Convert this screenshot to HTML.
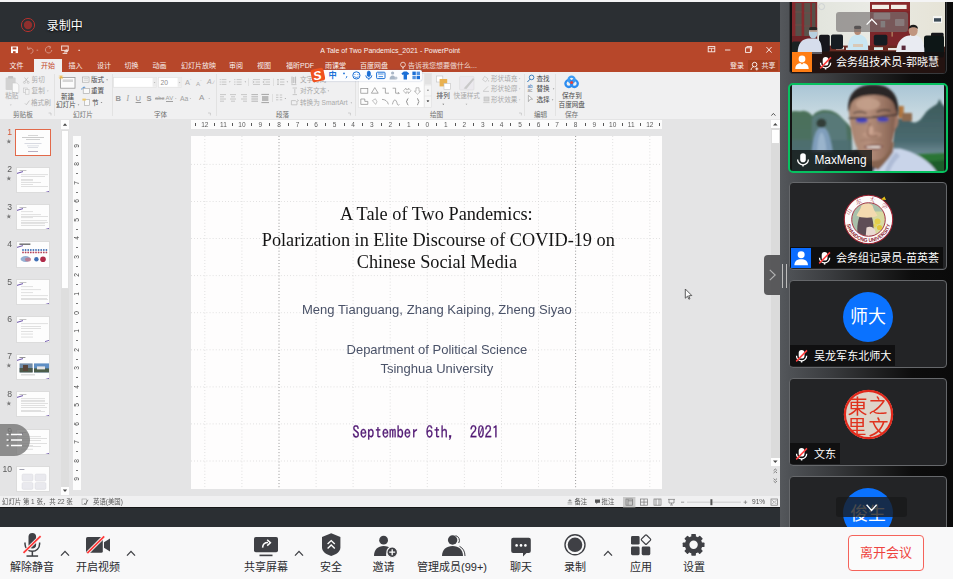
<!DOCTYPE html><html lang="zh"><head><meta charset="utf-8"><title>Meeting</title><style>
*{margin:0;padding:0;box-sizing:border-box}
html,body{width:953px;height:579px;overflow:hidden;background:#2b2f33;font-family:"Liberation Sans","Noto Sans CJK SC",sans-serif}
#root{position:relative;width:953px;height:579px;overflow:hidden;background:#2b2f33}
.abs{position:absolute}
.t{position:absolute;white-space:nowrap;line-height:1}
#topstrip{left:0;top:0;width:953px;height:2px;background:#f4f4f5}
/* ppt */
#ppt{left:0;top:42px;width:780px;height:466px;background:#e4e4e5;overflow:hidden}
#pptin{position:absolute;left:0;top:0;width:780px;height:466px;filter:blur(.4px)}
#ttl{left:0;top:0;width:780px;height:29px;background:#b7472a}
#ribbon{left:0;top:29px;width:780px;height:48px;background:#f1f1f1}
.tab{position:absolute;top:19.5px;font-size:7px;color:#fff;white-space:nowrap;line-height:8px;opacity:.92}
.rl{position:absolute;font-size:6.5px;color:#555;white-space:nowrap;line-height:7px}
.rg{position:absolute;font-size:6.5px;color:#8a8a8a;white-space:nowrap;line-height:7px}
.gl{position:absolute;font-size:6.5px;color:#666;white-space:nowrap;line-height:7px;top:40px}
.sep{position:absolute;top:3px;width:1px;height:42px;background:#dcdcdc}
#status{left:0;top:453.5px;width:780px;height:12.5px;background:#f1f1f1}
.st{position:absolute;top:3px;font-size:6.5px;color:#555;white-space:nowrap;line-height:7px}
/* toolbar */
#tb{left:0;top:527px;width:953px;height:52px;background:#f8f8f9}
.lb{position:absolute;top:33.5px;font-size:11px;line-height:12px;color:#2a2b2e;white-space:nowrap;transform:translateX(-50%)}
.ic{position:absolute;overflow:visible}
/* right panel */
#rp{left:780px;top:2px;width:173px;height:525px;background:linear-gradient(90deg,#55585c 0px,#4e5155 10px,#3a3c3f 50px,#232425 90px,#0d0d0d 132px,#0a0a0a 173px);overflow:hidden}
.tile{position:absolute;left:9px;width:158px;height:90px;background:#232426;border:1px solid #66686b;border-radius:4px;overflow:hidden}
.nm{position:absolute;left:0;bottom:.7px;height:20px;background:rgba(12,12,13,.82);color:#fff;font-size:11px;line-height:20px;white-space:nowrap}
</style></head><body><div id="root">
<div id="topstrip" class="abs"></div>
<svg class="abs" style="left:19px;top:16px" width="18" height="18" viewBox="0 0 18 18"><circle cx="9" cy="9" r="6.6" fill="none" stroke="#b3312d" stroke-width="1"/><circle cx="9" cy="9" r="4.2" fill="#8f2f2d"/></svg>
<div class="t" style="left:46.8px;top:19.8px;font-size:12px;color:#fff;text-shadow:0 1px 2px #000">录制中</div>
<div id="ppt" class="abs"><div id="pptin">
<div class="abs" style="left:0;top:-42px;width:780px;height:579px">
<div class="abs" style="left:0;top:42px;width:780px;height:30px;background:#b7472a"></div>
<div class="abs" style="left:0;top:72px;width:780px;height:47px;background:#f0f0f1"></div>
<div class="abs" style="left:34px;top:59px;width:27.5px;height:14px;background:#f0f0f1"></div>
<svg class="abs" style="left:0;top:42px" width="780" height="17" viewBox="0 42 780 17">
<g fill="none" stroke="#fff" stroke-width="1">
<rect x="11" y="46.5" width="7" height="6.6" fill="#fff" stroke="none"/><rect x="12.6" y="47.4" width="3.8" height="2" fill="#b7472a" stroke="none"/><rect x="13" y="51.2" width="2.6" height="1.9" fill="#b7472a" stroke="none"/>
<g opacity=".42"><path d="M28.4 48.6 C31 47.4 33.2 48.8 33 51.2 C32.8 52.6 31.8 53.4 30.6 53.4"/><path d="M27.6 46.6 L27.8 49.4 L30.4 48.8" />
<path d="M36.6 50.2 h1.6"/>
<path d="M50.2 47 A3.2 3.2 0 1 0 51.8 50"/><path d="M48.6 46 L50.6 46.8 L49.8 48.8"/></g>
<g opacity=".8"><rect x="61.6" y="46" width="6.6" height="4.4"/><path d="M64.9 50.4 v2.4 M62.6 53.4 h4.6"/><circle cx="66.6" cy="50.8" r="1.6" fill="#fff" stroke="none"/></g>
<path d="M78.4 50 h1.6 l-.8 1 z" fill="#fff" stroke="#fff" stroke-width=".5" opacity=".8"/>
</g>
<g fill="none" stroke="#fff" stroke-width=".9" opacity=".92">
<rect x="708.2" y="46.6" width="6.6" height="5.2"/><path d="M708.2 48.4 h6.6 M711.5 48.4 v3.4" stroke-width=".7"/>
<path d="M725 50 h5.4"/>
<rect x="745.6" y="47.8" width="4.8" height="4.6"/><path d="M746.8 47.8 v-1.2 h4.8 v4.6 h-1.2"/>
<path d="M766.4 47 L771.6 52.6 M771.6 47 L766.4 52.6"/>
</g></svg>
<div class="t" style="left:320.3px;top:46.9px;font-size:7.02px;color:#fff;opacity:.93">A Tale of Two Pandemics_2021 - PowerPoint</div>
<div class="tab" style="left:9.5px;top:61.5px">文件</div>
<div class="tab" style="left:68.5px;top:61.5px">插入</div>
<div class="tab" style="left:97px;top:61.5px">设计</div>
<div class="tab" style="left:124.5px;top:61.5px">切换</div>
<div class="tab" style="left:152.5px;top:61.5px">动画</div>
<div class="tab" style="left:181px;top:61.5px">幻灯片放映</div>
<div class="tab" style="left:229px;top:61.5px">审阅</div>
<div class="tab" style="left:257px;top:61.5px">视图</div>
<div class="tab" style="left:286px;top:61.5px">福昕PDF</div>
<div class="tab" style="left:325px;top:61.5px">雨课堂</div>
<div class="tab" style="left:360px;top:61.5px">百度网盘</div>
<div class="tab" style="left:41px;top:61.5px;color:#c4482a;opacity:1">开始</div>
<div class="tab" style="left:408px;top:61.5px;opacity:.8">告诉我您想要做什么...</div>
<svg class="abs" style="left:399px;top:61px" width="8" height="10" viewBox="0 0 8 10"><circle cx="4" cy="3.6" r="2.4" fill="none" stroke="#fff" stroke-width=".8" opacity=".85"/><path d="M3 6.6 h2 M3.2 7.8 h1.6" stroke="#fff" stroke-width=".7" opacity=".85"/></svg>
<div class="tab" style="left:730px;top:61.5px">登录</div>
<div class="abs" style="left:748px;top:59.5px;width:30px;height:11.5px;background:#a5401f"></div>
<svg class="abs" style="left:750px;top:60.5px" width="10" height="10" viewBox="0 0 10 10"><circle cx="4.6" cy="3.6" r="2.3" fill="none" stroke="#fff" stroke-width=".9"/><path d="M1 9 C1.2 7 2.4 6 3.6 5.8 M6.8 6.4 v3 M5.3 7.9 h3" fill="none" stroke="#fff" stroke-width=".9"/></svg>
<div class="tab" style="left:761.5px;top:61.5px">共享</div>
<svg class="abs" style="left:0;top:72px" width="780" height="47" viewBox="0 72 780 47">
<g opacity=".9">
<!-- paste -->
<rect x="5.6" y="77.6" width="10" height="12.4" rx="1" fill="#cfcfcf"/><rect x="8" y="76" width="5.2" height="2.6" rx=".8" fill="#bdbdbd"/><path d="M12.4 83 h4.4 l2 2 v7.6 h-6.4 z" fill="#fafafa" stroke="#c6c6c6" stroke-width=".6"/>
<!-- cut copy brush icons -->
<path d="M24.6 77.6 l3.4 4.2 M28 77.6 l-3.4 4.2" stroke="#b5b5b5" stroke-width=".8"/><circle cx="24.4" cy="82.4" r="1" fill="none" stroke="#b5b5b5" stroke-width=".6"/><circle cx="28.2" cy="82.4" r="1" fill="none" stroke="#b5b5b5" stroke-width=".6"/>
<rect x="23.6" y="88" width="3.6" height="4.6" fill="none" stroke="#c0c0c0" stroke-width=".6"/><rect x="25.4" y="89.6" width="3.6" height="4.6" fill="#f4f4f4" stroke="#c0c0c0" stroke-width=".6"/>
<path d="M25 103.4 l1.4 1.4 l3 -4.2" stroke="#c0c0c0" stroke-width=".9" fill="none"/>
<!-- new slide -->
<rect x="60.6" y="77.4" width="14.4" height="10.8" fill="#fdfdfd" stroke="#8c8c8c" stroke-width=".8"/><rect x="62.6" y="79.4" width="10.4" height="2.6" fill="#d4d4d4"/>
<path d="M61 75 v4.4 M58.8 77.2 h4.4 M59.4 75.6 l3.2 3.2 M62.6 75.6 l-3.2 3.2" stroke="#f0b429" stroke-width=".7"/>
<path d="M77.6 104.4 h1.8 l-.9 1.1 z" fill="#666"/>
<!-- layout reset section icons -->
<rect x="82.6" y="77" width="6.4" height="5.2" fill="#fafafa" stroke="#9a9a9a" stroke-width=".6"/><path d="M83.6 78.6 h4.4 M83.6 80.2 h4.4" stroke="#b5b5b5" stroke-width=".6"/>
<rect x="83.2" y="88.4" width="6.2" height="5" fill="#fafafa" stroke="#9a9a9a" stroke-width=".6"/><path d="M81.8 89.6 a2.4 2.4 0 0 1 3.4 -2.2" fill="none" stroke="#2b78c8" stroke-width=".9"/>
<rect x="84.4" y="99.4" width="5" height="6" fill="#fafafa" stroke="#a0a0a0" stroke-width=".6"/><rect x="82.4" y="98.6" width="3.4" height="2" fill="#efc45a"/>
<path d="M106.2 79.4 h1.8 l-.9 1.1 z M100.6 102 h1.8 l-.9 1.1 z" fill="#666"/>
</g>
<!-- separators -->
<g stroke="#e2e2e2" stroke-width="1"><path d="M54.5 74 v42 M112.5 74 v42 M216.5 74 v42 M355.5 74 v42 M524.5 74 v42 M555.5 74 v42"/></g>
<!-- font boxes -->
<rect x="113.5" y="77.6" width="43" height="9.6" fill="#fff" stroke="#dedede" stroke-width=".6"/><rect x="152.6" y="78" width="3.8" height="8.8" fill="#ececec"/>
<rect x="158.6" y="77.6" width="23" height="9.6" fill="#fff" stroke="#dedede" stroke-width=".6"/><rect x="177.6" y="78" width="3.8" height="8.8" fill="#ececec"/>
<path d="M153.8 82 h1.6 l-.8 1 z M178.8 82 h1.6 l-.8 1 z" fill="#aaa"/>
<!-- paragraph icons -->
<g stroke="#bdbdbd" stroke-width=".8" fill="none">
<path d="M221.6 79.6 h4.8 M221.6 82 h4.8 M221.6 84.4 h4.8"/><path d="M219.8 79.6 h.8 M219.8 82 h.8 M219.8 84.4 h.8" stroke="#a8a8a8"/>
<path d="M236.6 79.6 h5 M236.6 82 h5 M236.6 84.4 h5"/><path d="M234.4 79.6 h.9 M234.4 82 h.9 M234.4 84.4 h.9" stroke="#a8a8a8"/>
<path d="M253 79.6 h7 M255.6 82 h4.4 M253 84.4 h7 M252.6 81 l1.6 1 l-1.6 1"/>
<path d="M263 79.6 h7 M265.6 82 h4.4 M263 84.4 h7 M264.4 81 l-1.6 1 l1.6 1"/>
<path d="M280 79.4 h4.4 M280 82 h4.4 M280 84.6 h4.4 M278 79 v6 M277.2 80 l.8 -1 l.8 1 M277.2 84 l.8 1 l.8 -1"/>
<path d="M220 94.6 h6 M220 96.8 h4 M220 99 h6 M220 101.2 h4"/>
<path d="M230 94.6 h6 M231 96.8 h4 M230 99 h6 M231 101.2 h4"/>
<path d="M241 94.6 h6 M243 96.8 h4 M241 99 h6 M243 101.2 h4"/>
<path d="M251.4 94.6 h6.6 M251.4 96.8 h6.6 M251.4 99 h6.6 M251.4 101.2 h6.6" stroke="#a5a5a5"/>
<path d="M261.4 94.4 h7.6 M261.4 102.6 h7.6" stroke="#8e8e8e"/><rect x="262" y="96" width="6.4" height="5" fill="#b9b9b9" stroke="none"/>
<path d="M276 95 h2.4 M276 97.4 h2.4 M276 99.8 h2.4 M279.8 95 h2.4 M279.8 97.4 h2.4 M279.8 99.8 h2.4"/>
<path d="M248.5 78.4 v7.6 M273.5 78.4 v7.6 M272.5 94 v8" stroke="#dadada"/>
<!-- text direction icons -->
<path d="M292 76.6 v7 M295.6 76.6 v7 M293.8 77 v6" stroke="#a8a8a8"/><path d="M291.4 84.6 h5"/>
<path d="M292.6 88 h4.4 M292.6 94.6 h4.4 M294.8 89 v4.6"/>
<path d="M291.4 100.6 h4 l1.6 1.6 v2.6 h-5.6 z M297 99.6 l1.6 1 l-1.6 1"/>
</g>
<g fill="#9a9a9a"><path d="M229 81.6 h1.6 l-.8 1 z M244.6 81.6 h1.6 l-.8 1 z M286.6 81.6 h1.6 l-.8 1 z M284.6 98 h1.6 l-.8 1 z M327.6 90.6 h1.6 l-.8 1 z M350.6 102.4 h1.6 l-.8 1 z"/></g>
<!-- shapes gallery -->
<rect x="358.6" y="73.4" width="65.6" height="34" fill="#fdfdfd" stroke="#e2e2e2" stroke-width=".6"/>
<rect x="424.2" y="73.4" width="7.4" height="34" fill="#f6f6f6" stroke="#e0e0e0" stroke-width=".6"/><rect x="424.6" y="73.8" width="6.6" height="10.6" fill="#e2e2e2"/>
<path d="M424.2 85 h7.4 M424.2 96 h7.4" stroke="#e0e0e0" stroke-width=".6"/>
<path d="M427 90.2 h1.8 M427 100.6 h1.8 l-.9 1.4 z" stroke="#555" stroke-width=".7" fill="#777"/>
<g fill="none" stroke="#8a8a8a" stroke-width=".7">
<rect x="360.8" y="88.4" width="7" height="4.8"/><path d="M371.4 93.2 l3.4 -5.6 l3.4 5.6 z"/><path d="M382.4 88.2 h3 v5 h3.6"/><path d="M392.6 88.2 h3 v5 h3.6 M398.2 92.2 l1 1 l-1 1"/>
<path d="M403.4 90.8 l2.6 -2.8 v1.6 h2.4 v-1.6 l2.6 2.8 l-2.6 2.8 v-1.6 h-2.4 v1.6 z" stroke="#a5a5a5"/><path d="M416 87.8 h3 v3.4 h1.6 l-3.1 3 l-3.1 -3 h1.6 z" stroke="#a5a5a5"/>
<path d="M360.8 104.4 v-5.4 h4 v2.4 h3 v3 z"/><path d="M372.4 100.6 l3 -1.8 l1.6 3 l-1.4 2.6 z" stroke="#a8a8a8"/><path d="M382 99.4 c3 0 5.6 1.6 6.4 5"/><path d="M392.4 104.4 c1.4 -6 3.6 -6 5 0 M397.4 104.4 c.6 1 1.4 1 2 0"/>
<path d="M408.4 98.4 c-1.6 0 -.8 3.2 -2.2 3.2 c1.4 0 .6 3.4 2.2 3.4" stroke="#666"/><path d="M417 98.4 c1.6 0 .8 3.2 2.2 3.2 c-1.4 0 -.6 3.4 -2.2 3.4" stroke="#666"/>
</g>
<!-- arrange -->
<rect x="436.4" y="76" width="6.4" height="6" fill="#fff" stroke="#c2c2c2" stroke-width=".6"/><rect x="439.6" y="79" width="7.6" height="7.4" fill="#e9b150"/><rect x="444" y="83.4" width="6.4" height="6" fill="#fff" stroke="#c2c2c2" stroke-width=".6"/>
<path d="M442.4 103.8 h1.8 l-.9 1.1 z" fill="#666"/><path d="M465.6 103.8 h1.8 l-.9 1.1 z" fill="#aaa"/>
<!-- quick style -->
<rect x="459.6" y="76.4" width="14.4" height="13.6" rx="1" fill="#ebe9ee" stroke="#dcdcdc" stroke-width=".6"/><path d="M463.6 88.6 l9.4 -10.6 l1.4 1.2 l-8 9.8 z" fill="#c9c9c9"/>
<!-- shape fill icons -->
<g fill="none" stroke="#c0c0c0" stroke-width=".7"><path d="M484.6 76.4 l3.4 2.4 l-2.4 3 l-3 -2.2 z M488.6 80 v1.6"/><path d="M483.4 91 l4.6 -4.6 M483 91.4 h6"/><rect x="484" y="97" width="5" height="4" fill="#d4d4d4"/><path d="M483.2 102.6 h6.4"/></g>
<g fill="#b5b5b5"><path d="M518.8 78.2 h1.6 l-.8 1 z M518.8 88.4 h1.6 l-.8 1 z M518.8 99.4 h1.6 l-.8 1 z"/></g>
<g fill="#777"><path d="M552.8 88.4 h1.6 l-.8 1 z M551.8 99.4 h1.6 l-.8 1 z"/></g>
<!-- find replace select icons -->
<circle cx="531.6" cy="77.4" r="2.3" fill="none" stroke="#2e75b6" stroke-width=".9"/><path d="M530 79.2 l-2.6 2.8" stroke="#2e75b6" stroke-width="1"/>
<path d="M528.4 101.6 v-6.2 l4.2 3.8 h-2.4 z" fill="#fdfdfd" stroke="#8a8a8a" stroke-width=".6"/>
<!-- baidu -->
<g fill="none" stroke-width="2.3"><circle cx="568.8" cy="83.6" r="3.4" stroke="#2c8cf0"/><circle cx="574.4" cy="83.6" r="3.4" stroke="#2c8cf0"/><circle cx="571.6" cy="79.6" r="3" stroke="#3b9cf5"/></g><circle cx="571.6" cy="82.6" r="1.5" fill="#e8413a"/>
<!-- dialog launchers -->
<g stroke="#b8b8b8" stroke-width=".6" fill="none"><path d="M48.6 113 h2.4 v2.4 M208 113 h2.4 v2.4 M348 113 h2.4 v2.4 M519 113 h2.4 v2.4"/></g>
<!-- collapse ribbon -->
<path d="M771.4 115.6 l2 -2.2 l2 2.2" fill="none" stroke="#555" stroke-width="1"/>
</svg>
<div class="rl" style="left:5.2px;top:92.4px;color:#a9a9a9;font-size:6.6px;">粘贴</div>
<svg class="abs" style="left:9px;top:103.5px" width="4" height="3" viewBox="0 0 4 3"><path d="M.8 .6 h2 l-1 1.2 z" fill="#c4c4c4"/></svg>
<div class="rl" style="left:31.6px;top:76.10000000000001px;color:#a9a9a9;font-size:6.6px;">剪切</div>
<div class="rl" style="left:31.6px;top:87.4px;color:#a9a9a9;font-size:6.6px;">复制</div>
<div class="rl" style="left:31px;top:98.7px;color:#a9a9a9;font-size:6.6px;">格式刷</div>
<svg class="abs" style="left:46px;top:90px" width="4" height="3" viewBox="0 0 4 3"><path d="M.8 .6 h2 l-1 1.2 z" fill="#c4c4c4"/></svg>
<div class="rl" style="left:13px;top:110.80000000000001px;color:#6f6f6f;font-size:6.6px;">剪贴板</div>
<div class="rl" style="left:61px;top:92.60000000000001px;color:#4a4a4a;font-size:6.6px;">新建</div>
<div class="rl" style="left:56px;top:100.80000000000001px;color:#4a4a4a;font-size:6.6px;">幻灯片</div>
<div class="rl" style="left:91px;top:76.10000000000001px;color:#4a4a4a;font-size:6.6px;">版式</div>
<div class="rl" style="left:91px;top:87.4px;color:#4a4a4a;font-size:6.6px;">重置</div>
<div class="rl" style="left:92px;top:98.7px;color:#4a4a4a;font-size:6.6px;">节</div>
<div class="rl" style="left:73px;top:110.80000000000001px;color:#6f6f6f;font-size:6.6px;">幻灯片</div>
<div class="rl" style="left:160.4px;top:78.80000000000001px;color:#8e8e8e;font-size:6.8px;">20</div>
<div class="rl" style="left:185px;top:77.4px;color:#a9a9a9;font-size:7.4px">A<span style="font-size:4px;vertical-align:3px">ˆ</span></div>
<div class="rl" style="left:196px;top:78.4px;color:#a9a9a9;font-size:6.2px">A<span style="font-size:4px;vertical-align:3px">ˇ</span></div>
<div class="rl" style="left:207px;top:77.8px;color:#a9a9a9;font-size:7px;font-style:italic">A<span style="font-size:5px">ﾉ</span></div>
<div class="rl" style="left:115.4px;top:94.6px;color:#979797;font-size:7.6px;font-weight:bold">B</div>
<div class="rl" style="left:126.4px;top:94.6px;color:#979797;font-size:7.6px;font-style:italic;font-family:'Liberation Serif',serif">I</div>
<div class="rl" style="left:135.6px;top:94.6px;color:#979797;font-size:7.6px;text-decoration:underline">U</div>
<div class="rl" style="left:146.6px;top:94.6px;color:#979797;font-size:7.6px;font-weight:bold">S</div>
<div class="rl" style="left:155px;top:95.39999999999999px;color:#a5a5a5;font-size:5.8px;text-decoration:line-through">abc</div>
<div class="rl" style="left:165.6px;top:94.8px;color:#a0a0a0;font-size:6px;border-bottom:.7px solid #a0a0a0;line-height:6.4px">AV</div>
<div class="rl" style="left:180px;top:94.8px;color:#a0a0a0;font-size:6.8px">Aa</div>
<div class="rl" style="left:199px;top:94.19999999999999px;color:#979797;font-size:8px">A</div>
<svg class="abs" style="left:174px;top:97px" width="40" height="4" viewBox="0 0 40 4"><path d="M1 1 h1.6 l-.8 1 z M15.6 1 h1.6 l-.8 1 z M34.4 1 h1.6 l-.8 1 z" fill="#b5b5b5"/></svg>
<div class="rl" style="left:154px;top:110.80000000000001px;color:#6f6f6f;font-size:6.6px;">字体</div>
<div class="rl" style="left:300px;top:75.7px;color:#a9a9a9;font-size:6.6px;">文字方向</div>
<div class="rl" style="left:300px;top:87.4px;color:#a9a9a9;font-size:6.6px;">对齐文本</div>
<div class="rl" style="left:300px;top:99.0px;color:#a9a9a9;font-size:6.6px;">转换为 SmartArt</div>
<div class="rl" style="left:276px;top:110.80000000000001px;color:#6f6f6f;font-size:6.6px;">段落</div>
<div class="rl" style="left:436.6px;top:92.4px;color:#4a4a4a;font-size:6.6px;">排列</div>
<div class="rl" style="left:453.6px;top:92.4px;color:#a9a9a9;font-size:6.6px;">快速样式</div>
<div class="rl" style="left:491px;top:75.0px;color:#a9a9a9;font-size:6.6px;">形状填充</div>
<div class="rl" style="left:491px;top:85.2px;color:#a9a9a9;font-size:6.6px;">形状轮廓</div>
<div class="rl" style="left:491px;top:96.2px;color:#a9a9a9;font-size:6.6px;">形状效果</div>
<div class="rl" style="left:430px;top:111.0px;color:#6f6f6f;font-size:6.6px;">绘图</div>
<div class="rl" style="left:536.4px;top:75.0px;color:#4a4a4a;font-size:6.6px;">查找</div>
<div class="rl" style="left:536.4px;top:85.2px;color:#4a4a4a;font-size:6.6px;">替换</div>
<div class="rl" style="left:536.4px;top:96.2px;color:#4a4a4a;font-size:6.6px;">选择</div>
<div class="rl" style="left:527.4px;top:84.6px;color:#2e75b6;font-size:4.6px;line-height:4px">ab<br><span style="color:#888">ac</span></div>
<div class="rl" style="left:534px;top:111.0px;color:#6f6f6f;font-size:6.6px;">编辑</div>
<div class="rl" style="left:562px;top:92.4px;color:#4a4a4a;font-size:6.6px;">保存到</div>
<div class="rl" style="left:558.6px;top:101.2px;color:#4a4a4a;font-size:6.6px;">百度网盘</div>
<div class="rl" style="left:565px;top:111.0px;color:#6f6f6f;font-size:6.6px;">保存</div>
<div class="abs" style="left:319px;top:69.6px;width:103.4px;height:11.6px;background:#fcfdff;border-radius:2px;box-shadow:0 0 1.5px rgba(80,110,160,.6)"></div>
<svg class="abs" style="left:309px;top:66px" width="116" height="18" viewBox="309 66 116 18">
<g transform="rotate(-12 317.8 75)"><rect x="311.2" y="68.6" width="13.2" height="12.8" rx="2.8" fill="#f0521f"/></g>
<text x="313.2" y="79.8" font-family="'Liberation Sans',sans-serif" font-weight="bold" font-style="italic" font-size="12.4" fill="#fff" transform="rotate(-10 317.6 75)">S</text>
<g fill="none" stroke="#1b6fd6" stroke-width="1">
<circle cx="356.4" cy="75.4" r="3.6"/><path d="M354.4 76.4 c1 1.4 3 1.4 4 0" stroke-width=".8"/><path d="M355 74 v.8 M357.8 74 v.8" stroke-width=".8"/>
<rect x="367.4" y="71.2" width="2.8" height="5.2" rx="1.4" fill="#1b6fd6"/><path d="M365.8 75.4 a3 3 0 0 0 6 0 M368.8 78.4 v1.4"/>
<rect x="376.6" y="72.2" width="8.4" height="6.4" rx=".8"/><path d="M378 74 h5.6 M378.6 76.6 h4.4" stroke-width=".8"/>
</g>
<circle cx="344" cy="73.4" r=".9" fill="#1b6fd6"/><path d="M346.4 76 c.6 .4 .4 1.6 -.6 2.2" stroke="#1b6fd6" stroke-width="1" fill="none"/>
<g fill="#a9b6c6"><circle cx="392.6" cy="73" r="1.6"/><path d="M389.6 79.4 c0 -3 1.4 -4 3 -4 c1.6 0 3 1 3 4 z"/><circle cx="396" cy="78" r="1.5" fill="#bcc6d2"/></g>
<path d="M401.4 73.4 l2.4 -1.8 h3 l2.4 1.8 l-1.2 1.6 l-1 -.6 v5 h-3.4 v-5 l-1 .6 z" fill="#1b6fd6"/>
<g fill="#1b6fd6"><rect x="412.4" y="71.6" width="3.4" height="3.4"/><rect x="416.6" y="71.6" width="3.4" height="3.4" opacity=".75"/><rect x="412.4" y="75.8" width="3.4" height="3.4" opacity=".75"/><rect x="416.6" y="75.8" width="3.4" height="3.4"/></g>
</svg>
<div class="t" style="left:328.6px;top:71.8px;font-size:8.2px;font-weight:bold;color:#1b6fd6">中</div>
<div class="abs" style="left:0;top:120px;width:69px;height:376px;background:#e4e4e5"></div>
<div class="abs" style="left:60.5px;top:129.5px;width:8px;height:357px;background:#dedede"></div>
<div class="abs" style="left:60.5px;top:129.5px;width:8px;height:159px;background:#fefefe;border:.5px solid #e0e0e0"></div>
<div class="abs" style="left:60.5px;top:120px;width:8px;height:8.5px;background:#fdfdfd"></div>
<div class="abs" style="left:60.5px;top:486.5px;width:8px;height:8.5px;background:#fdfdfd"></div>
<svg class="abs" style="left:60.5px;top:120px" width="8" height="376" viewBox="0 0 8 376"><path d="M1.8 5.8 h4.4 l-2.2 -2.6 z M1.8 369.4 h4.4 l-2.2 2.6 z" fill="#4a4a4a"/></svg>
<div class="t" style="left:7.2px;top:127.9px;font-size:8.6px;color:#d35a3a">1</div>
<div class="t" style="left:6.2px;top:138.7px;font-size:5.2px;color:#777">★</div>
<div class="abs" style="left:15.4px;top:128.7px;width:35.4px;height:27.6px;background:#fdfdfd;border:1.2px solid #e2694a;overflow:hidden">
<svg class="abs" style="left:0;top:0" width="34" height="26" viewBox="0 0 34 26"><rect x="12" y="5.2" width="10" height=".6" fill="#bbb"/><rect x="6" y="7.4" width="22" height=".6" fill="#aaa"/><rect x="10" y="9.4" width="14" height=".6" fill="#b4b4b4"/><rect x="8.5" y="13" width="17" height=".6" fill="#c0c4d0"/><rect x="11" y="15.6" width="12" height=".6" fill="#c6cad4"/><rect x="12" y="17" width="10" height=".6" fill="#c6cad4"/><rect x="12" y="21.2" width="10" height=".6" fill="#8a7a9a"/></svg>
</div>
<div class="t" style="left:7.2px;top:165.3px;font-size:8.6px;color:#5c5c5c">2</div>
<div class="t" style="left:6.2px;top:176.1px;font-size:5.2px;color:#777">★</div>
<div class="abs" style="left:16px;top:166.5px;width:34px;height:26.4px;background:#fdfdfd;border:.5px solid #dcdcdc;overflow:hidden">
<svg class="abs" style="left:0;top:0" width="34" height="26" viewBox="0 0 34 26"><path d="M0 5.4 L6 3.6" stroke="#5b3fa0" stroke-width=".9"/><rect x="2.4" y="2" width="7" height=".7" fill="#aaa"/><rect x="4" y="6.6" width="27" height=".45" fill="#bcbcbc"/><rect x="4" y="8.1" width="24" height=".45" fill="#bcbcbc"/><rect x="4" y="11.1" width="12" height=".45" fill="#bcbcbc"/><rect x="4" y="12.6" width="12" height=".45" fill="#bcbcbc"/><rect x="4" y="14.1" width="20" height=".45" fill="#bcbcbc"/><rect x="4" y="16.5" width="12" height=".45" fill="#bcbcbc"/><rect x="4" y="18.0" width="27" height=".45" fill="#bcbcbc"/><path d="M28 24.6 L34 22.8" stroke="#5b3fa0" stroke-width=".8"/></svg>
</div>
<div class="t" style="left:7.2px;top:202.7px;font-size:8.6px;color:#5c5c5c">3</div>
<div class="t" style="left:6.2px;top:213.5px;font-size:5.2px;color:#777">★</div>
<div class="abs" style="left:16px;top:203.9px;width:34px;height:26.4px;background:#fdfdfd;border:.5px solid #dcdcdc;overflow:hidden">
<svg class="abs" style="left:0;top:0" width="34" height="26" viewBox="0 0 34 26"><path d="M0 5.4 L6 3.6" stroke="#5b3fa0" stroke-width=".9"/><rect x="2.4" y="2" width="7" height=".7" fill="#aaa"/><rect x="4" y="6.6" width="12" height=".45" fill="#bcbcbc"/><rect x="4" y="9.6" width="20" height=".45" fill="#bcbcbc"/><rect x="4" y="11.1" width="27" height=".45" fill="#bcbcbc"/><rect x="4" y="12.6" width="12" height=".45" fill="#bcbcbc"/><rect x="4" y="15.6" width="26" height=".45" fill="#bcbcbc"/><rect x="4" y="17.1" width="27" height=".45" fill="#bcbcbc"/><rect x="4" y="18.6" width="24" height=".45" fill="#bcbcbc"/><rect x="4" y="20.1" width="24" height=".45" fill="#bcbcbc"/><path d="M28 24.6 L34 22.8" stroke="#5b3fa0" stroke-width=".8"/></svg>
</div>
<div class="t" style="left:7.2px;top:240.2px;font-size:8.6px;color:#5c5c5c">4</div>
<div class="abs" style="left:16px;top:241.4px;width:34px;height:26.4px;background:#fdfdfd;border:.5px solid #dcdcdc;overflow:hidden">
<svg class="abs" style="left:0;top:0" width="34" height="26" viewBox="0 0 34 26"><path d="M0 5.4 L6 3.6" stroke="#5b3fa0" stroke-width=".9"/><rect x="2.4" y="1.6" width="11" height="1.1" fill="#444"/><circle cx="6.0" cy="8" r=".9" fill="#3f6fb5"/><circle cx="6.0" cy="10.4" r=".9" fill="#b5455a"/><circle cx="8.6" cy="8" r=".9" fill="#3f6fb5"/><circle cx="8.6" cy="10.4" r=".9" fill="#b5455a"/><circle cx="11.2" cy="8" r=".9" fill="#3f6fb5"/><circle cx="11.2" cy="10.4" r=".9" fill="#b5455a"/><circle cx="13.8" cy="8" r=".9" fill="#3f6fb5"/><circle cx="13.8" cy="10.4" r=".9" fill="#b5455a"/><circle cx="16.4" cy="8" r=".9" fill="#3f6fb5"/><circle cx="16.4" cy="10.4" r=".9" fill="#b5455a"/><circle cx="19.0" cy="8" r=".9" fill="#3f6fb5"/><circle cx="19.0" cy="10.4" r=".9" fill="#b5455a"/><circle cx="21.6" cy="8" r=".9" fill="#3f6fb5"/><circle cx="21.6" cy="10.4" r=".9" fill="#b5455a"/><circle cx="24.2" cy="8" r=".9" fill="#3f6fb5"/><circle cx="24.2" cy="10.4" r=".9" fill="#b5455a"/><circle cx="26.8" cy="8" r=".9" fill="#3f6fb5"/><circle cx="26.8" cy="10.4" r=".9" fill="#b5455a"/><circle cx="29.4" cy="8" r=".9" fill="#3f6fb5"/><circle cx="29.4" cy="10.4" r=".9" fill="#b5455a"/><ellipse cx="8.6" cy="17" rx="5" ry="3" fill="#7a9cc8" opacity=".8"/><ellipse cx="11" cy="17.4" rx="3" ry="2" fill="#c86a7a" opacity=".7"/><circle cx="19.4" cy="17.2" r="2.2" fill="#3f6fb5"/><circle cx="26" cy="17.2" r="2.8" fill="#b02a48"/></svg>
</div>
<div class="t" style="left:7.2px;top:277.6px;font-size:8.6px;color:#5c5c5c">5</div>
<div class="abs" style="left:16px;top:278.8px;width:34px;height:26.4px;background:#fdfdfd;border:.5px solid #dcdcdc;overflow:hidden">
<svg class="abs" style="left:0;top:0" width="34" height="26" viewBox="0 0 34 26"><path d="M0 5.4 L6 3.6" stroke="#5b3fa0" stroke-width=".9"/><rect x="2.4" y="2" width="7" height=".7" fill="#aaa"/><rect x="4" y="6.6" width="12" height=".45" fill="#bcbcbc"/><rect x="4" y="9.6" width="20" height=".45" fill="#bcbcbc"/><rect x="4" y="12.6" width="12" height=".45" fill="#bcbcbc"/><rect x="4" y="15.6" width="27" height=".45" fill="#bcbcbc"/><rect x="4" y="18.0" width="26" height=".45" fill="#bcbcbc"/><rect x="4" y="19.5" width="27" height=".45" fill="#bcbcbc"/><path d="M28 24.6 L34 22.8" stroke="#5b3fa0" stroke-width=".8"/></svg>
</div>
<div class="t" style="left:7.2px;top:315.0px;font-size:8.6px;color:#5c5c5c">6</div>
<div class="abs" style="left:16px;top:316.2px;width:34px;height:26.4px;background:#fdfdfd;border:.5px solid #dcdcdc;overflow:hidden">
<svg class="abs" style="left:0;top:0" width="34" height="26" viewBox="0 0 34 26"><path d="M0 5.4 L6 3.6" stroke="#5b3fa0" stroke-width=".9"/><rect x="2.4" y="2" width="7" height=".7" fill="#aaa"/><rect x="4" y="6.6" width="27" height=".45" fill="#bcbcbc"/><rect x="4" y="9.0" width="20" height=".45" fill="#bcbcbc"/><rect x="4" y="11.4" width="20" height=".45" fill="#bcbcbc"/><rect x="4" y="14.4" width="12" height=".45" fill="#bcbcbc"/><rect x="4" y="16.8" width="12" height=".45" fill="#bcbcbc"/><rect x="4" y="19.8" width="12" height=".45" fill="#bcbcbc"/><path d="M28 24.6 L34 22.8" stroke="#5b3fa0" stroke-width=".8"/></svg>
</div>
<div class="t" style="left:7.2px;top:352.4px;font-size:8.6px;color:#5c5c5c">7</div>
<div class="t" style="left:6.2px;top:363.2px;font-size:5.2px;color:#777">★</div>
<div class="abs" style="left:16px;top:353.6px;width:34px;height:26.4px;background:#fdfdfd;border:.5px solid #dcdcdc;overflow:hidden">
<svg class="abs" style="left:0;top:0" width="34" height="26" viewBox="0 0 34 26"><path d="M0 5.4 L6 3.6" stroke="#5b3fa0" stroke-width=".9"/><rect x="2.4" y="2" width="6" height=".9" fill="#888"/><rect x="2.6" y="8.4" width="13" height="9" fill="#6f8aa6"/><rect x="2.6" y="13" width="13" height="4.4" fill="#4d5a4a"/><rect x="6" y="10" width="5" height="6" fill="#59453a"/><rect x="17" y="8.4" width="15" height="9" fill="#5f8fc4"/><rect x="17" y="13.4" width="15" height="4" fill="#4b5d49"/><rect x="20" y="11.4" width="8" height="3" fill="#e5e5e5"/><rect x="4" y="19.6" width="14" height=".6" fill="#aaa"/><path d="M28 24.6 L34 22.8" stroke="#5b3fa0" stroke-width=".8"/></svg>
</div>
<div class="t" style="left:7.2px;top:389.8px;font-size:8.6px;color:#5c5c5c">8</div>
<div class="t" style="left:6.2px;top:400.6px;font-size:5.2px;color:#777">★</div>
<div class="abs" style="left:16px;top:391.0px;width:34px;height:26.4px;background:#fdfdfd;border:.5px solid #dcdcdc;overflow:hidden">
<svg class="abs" style="left:0;top:0" width="34" height="26" viewBox="0 0 34 26"><path d="M0 5.4 L6 3.6" stroke="#5b3fa0" stroke-width=".9"/><rect x="2.4" y="2" width="7" height=".7" fill="#aaa"/><rect x="4" y="6.6" width="24" height=".45" fill="#bcbcbc"/><rect x="4" y="8.1" width="24" height=".45" fill="#bcbcbc"/><rect x="4" y="9.6" width="24" height=".45" fill="#bcbcbc"/><rect x="4" y="11.1" width="27" height=".45" fill="#bcbcbc"/><rect x="4" y="13.5" width="24" height=".45" fill="#bcbcbc"/><rect x="4" y="15.0" width="26" height=".45" fill="#bcbcbc"/><rect x="4" y="18.0" width="20" height=".45" fill="#bcbcbc"/><rect x="4" y="19.5" width="24" height=".45" fill="#bcbcbc"/><path d="M28 24.6 L34 22.8" stroke="#5b3fa0" stroke-width=".8"/></svg>
</div>
<div class="t" style="left:7.2px;top:427.3px;font-size:8.6px;color:#5c5c5c">9</div>
<div class="t" style="left:6.2px;top:438.1px;font-size:5.2px;color:#777">★</div>
<div class="abs" style="left:16px;top:428.5px;width:34px;height:26.4px;background:#fdfdfd;border:.5px solid #dcdcdc;overflow:hidden">
<svg class="abs" style="left:0;top:0" width="34" height="26" viewBox="0 0 34 26"><path d="M0 5.4 L6 3.6" stroke="#5b3fa0" stroke-width=".9"/><rect x="2.4" y="2" width="7" height=".7" fill="#aaa"/><rect x="4" y="6.6" width="20" height=".45" fill="#bcbcbc"/><rect x="4" y="8.1" width="26" height=".45" fill="#bcbcbc"/><rect x="4" y="10.5" width="20" height=".45" fill="#bcbcbc"/><rect x="4" y="13.5" width="26" height=".45" fill="#bcbcbc"/><rect x="4" y="15.0" width="12" height=".45" fill="#bcbcbc"/><rect x="4" y="16.5" width="20" height=".45" fill="#bcbcbc"/><rect x="4" y="18.9" width="12" height=".45" fill="#bcbcbc"/><path d="M28 24.6 L34 22.8" stroke="#5b3fa0" stroke-width=".8"/></svg>
</div>
<div class="t" style="left:2.6px;top:464.7px;font-size:8.6px;color:#5c5c5c">10</div>
<div class="abs" style="left:16px;top:465.9px;width:34px;height:26.4px;background:#fdfdfd;border:.5px solid #dcdcdc;overflow:hidden">
<svg class="abs" style="left:0;top:0" width="34" height="26" viewBox="0 0 34 26"><rect x="2.4" y="2" width="5" height=".9" fill="#99a"/><rect x="5" y="7" width="11" height="7" rx="1.5" fill="#e9e9ee" stroke="#d5d5dc" stroke-width=".4"/><rect x="18" y="7" width="11" height="7" rx="1.5" fill="#e9e9ee" stroke="#d5d5dc" stroke-width=".4"/><rect x="5" y="15.4" width="11" height="7" rx="1.5" fill="#e9e9ee" stroke="#d5d5dc" stroke-width=".4"/><rect x="18" y="15.4" width="11" height="7" rx="1.5" fill="#e9e9ee" stroke="#d5d5dc" stroke-width=".4"/></svg>
</div>
<div class="abs" style="left:-26px;top:424px;width:56px;height:32px;border-radius:16px;background:rgba(118,118,118,.8)"></div>
<svg class="abs" style="left:0;top:424px" width="30" height="32" viewBox="0 0 30 32"><g stroke="#fff" stroke-width="1.5"><path d="M6.6 10.6 h2 M11 10.6 h11 M6.6 16 h2 M11 16 h11 M6.6 21.4 h2 M11 21.4 h11"/></g></svg>
<div class="abs" style="left:73px;top:135.6px;width:8px;height:354px;background:#fcfcfc"></div>
<div class="t" style="left:74.2px;top:142.6px;width:6px;height:6px;font-size:6.6px;color:#444;text-align:center;transform:rotate(-90deg);line-height:6px">9</div>
<div class="t" style="left:74.2px;top:161.2px;width:6px;height:6px;font-size:6.6px;color:#444;text-align:center;transform:rotate(-90deg);line-height:6px">8</div>
<div class="t" style="left:74.2px;top:179.7px;width:6px;height:6px;font-size:6.6px;color:#444;text-align:center;transform:rotate(-90deg);line-height:6px">7</div>
<div class="t" style="left:74.2px;top:198.3px;width:6px;height:6px;font-size:6.6px;color:#444;text-align:center;transform:rotate(-90deg);line-height:6px">6</div>
<div class="t" style="left:74.2px;top:216.8px;width:6px;height:6px;font-size:6.6px;color:#444;text-align:center;transform:rotate(-90deg);line-height:6px">5</div>
<div class="t" style="left:74.2px;top:235.3px;width:6px;height:6px;font-size:6.6px;color:#444;text-align:center;transform:rotate(-90deg);line-height:6px">4</div>
<div class="t" style="left:74.2px;top:253.9px;width:6px;height:6px;font-size:6.6px;color:#444;text-align:center;transform:rotate(-90deg);line-height:6px">3</div>
<div class="t" style="left:74.2px;top:272.4px;width:6px;height:6px;font-size:6.6px;color:#444;text-align:center;transform:rotate(-90deg);line-height:6px">2</div>
<div class="t" style="left:74.2px;top:291.0px;width:6px;height:6px;font-size:6.6px;color:#444;text-align:center;transform:rotate(-90deg);line-height:6px">1</div>
<div class="t" style="left:74.2px;top:309.5px;width:6px;height:6px;font-size:6.6px;color:#444;text-align:center;transform:rotate(-90deg);line-height:6px">0</div>
<div class="t" style="left:74.2px;top:328.0px;width:6px;height:6px;font-size:6.6px;color:#444;text-align:center;transform:rotate(-90deg);line-height:6px">1</div>
<div class="t" style="left:74.2px;top:346.6px;width:6px;height:6px;font-size:6.6px;color:#444;text-align:center;transform:rotate(-90deg);line-height:6px">2</div>
<div class="t" style="left:74.2px;top:365.1px;width:6px;height:6px;font-size:6.6px;color:#444;text-align:center;transform:rotate(-90deg);line-height:6px">3</div>
<div class="t" style="left:74.2px;top:383.7px;width:6px;height:6px;font-size:6.6px;color:#444;text-align:center;transform:rotate(-90deg);line-height:6px">4</div>
<div class="t" style="left:74.2px;top:402.2px;width:6px;height:6px;font-size:6.6px;color:#444;text-align:center;transform:rotate(-90deg);line-height:6px">5</div>
<div class="t" style="left:74.2px;top:420.7px;width:6px;height:6px;font-size:6.6px;color:#444;text-align:center;transform:rotate(-90deg);line-height:6px">6</div>
<div class="t" style="left:74.2px;top:439.3px;width:6px;height:6px;font-size:6.6px;color:#444;text-align:center;transform:rotate(-90deg);line-height:6px">7</div>
<div class="t" style="left:74.2px;top:457.8px;width:6px;height:6px;font-size:6.6px;color:#444;text-align:center;transform:rotate(-90deg);line-height:6px">8</div>
<div class="t" style="left:74.2px;top:476.4px;width:6px;height:6px;font-size:6.6px;color:#444;text-align:center;transform:rotate(-90deg);line-height:6px">9</div>
<div class="abs" style="left:76.4px;top:154.6px;width:1.6px;height:.7px;background:#777"></div>
<div class="abs" style="left:76.4px;top:173.2px;width:1.6px;height:.7px;background:#777"></div>
<div class="abs" style="left:76.4px;top:191.7px;width:1.6px;height:.7px;background:#777"></div>
<div class="abs" style="left:76.4px;top:210.2px;width:1.6px;height:.7px;background:#777"></div>
<div class="abs" style="left:76.4px;top:228.8px;width:1.6px;height:.7px;background:#777"></div>
<div class="abs" style="left:76.4px;top:247.3px;width:1.6px;height:.7px;background:#777"></div>
<div class="abs" style="left:76.4px;top:265.8px;width:1.6px;height:.7px;background:#777"></div>
<div class="abs" style="left:76.4px;top:284.4px;width:1.6px;height:.7px;background:#777"></div>
<div class="abs" style="left:76.4px;top:302.9px;width:1.6px;height:.7px;background:#777"></div>
<div class="abs" style="left:76.4px;top:321.5px;width:1.6px;height:.7px;background:#777"></div>
<div class="abs" style="left:76.4px;top:340.0px;width:1.6px;height:.7px;background:#777"></div>
<div class="abs" style="left:76.4px;top:358.6px;width:1.6px;height:.7px;background:#777"></div>
<div class="abs" style="left:76.4px;top:377.1px;width:1.6px;height:.7px;background:#777"></div>
<div class="abs" style="left:76.4px;top:395.6px;width:1.6px;height:.7px;background:#777"></div>
<div class="abs" style="left:76.4px;top:414.2px;width:1.6px;height:.7px;background:#777"></div>
<div class="abs" style="left:76.4px;top:432.7px;width:1.6px;height:.7px;background:#777"></div>
<div class="abs" style="left:76.4px;top:451.2px;width:1.6px;height:.7px;background:#777"></div>
<div class="abs" style="left:76.4px;top:469.8px;width:1.6px;height:.7px;background:#777"></div>
<div class="abs" style="left:191px;top:120.2px;width:471px;height:8.4px;background:#fcfcfc"></div>
<div class="t" style="left:199.8px;top:121px;width:10px;text-align:center;font-size:6.5px;color:#5a5a5a;line-height:7px">12</div>
<div class="t" style="left:218.4px;top:121px;width:10px;text-align:center;font-size:6.5px;color:#5a5a5a;line-height:7px">11</div>
<div class="t" style="left:236.9px;top:121px;width:10px;text-align:center;font-size:6.5px;color:#5a5a5a;line-height:7px">10</div>
<div class="t" style="left:255.4px;top:121px;width:10px;text-align:center;font-size:6.5px;color:#5a5a5a;line-height:7px">9</div>
<div class="t" style="left:274.0px;top:121px;width:10px;text-align:center;font-size:6.5px;color:#5a5a5a;line-height:7px">8</div>
<div class="t" style="left:292.5px;top:121px;width:10px;text-align:center;font-size:6.5px;color:#5a5a5a;line-height:7px">7</div>
<div class="t" style="left:311.1px;top:121px;width:10px;text-align:center;font-size:6.5px;color:#5a5a5a;line-height:7px">6</div>
<div class="t" style="left:329.6px;top:121px;width:10px;text-align:center;font-size:6.5px;color:#5a5a5a;line-height:7px">5</div>
<div class="t" style="left:348.1px;top:121px;width:10px;text-align:center;font-size:6.5px;color:#5a5a5a;line-height:7px">4</div>
<div class="t" style="left:366.7px;top:121px;width:10px;text-align:center;font-size:6.5px;color:#5a5a5a;line-height:7px">3</div>
<div class="t" style="left:385.2px;top:121px;width:10px;text-align:center;font-size:6.5px;color:#5a5a5a;line-height:7px">2</div>
<div class="t" style="left:403.8px;top:121px;width:10px;text-align:center;font-size:6.5px;color:#5a5a5a;line-height:7px">1</div>
<div class="t" style="left:422.3px;top:121px;width:10px;text-align:center;font-size:6.5px;color:#5a5a5a;line-height:7px">0</div>
<div class="t" style="left:440.8px;top:121px;width:10px;text-align:center;font-size:6.5px;color:#5a5a5a;line-height:7px">1</div>
<div class="t" style="left:459.4px;top:121px;width:10px;text-align:center;font-size:6.5px;color:#5a5a5a;line-height:7px">2</div>
<div class="t" style="left:477.9px;top:121px;width:10px;text-align:center;font-size:6.5px;color:#5a5a5a;line-height:7px">3</div>
<div class="t" style="left:496.5px;top:121px;width:10px;text-align:center;font-size:6.5px;color:#5a5a5a;line-height:7px">4</div>
<div class="t" style="left:515.0px;top:121px;width:10px;text-align:center;font-size:6.5px;color:#5a5a5a;line-height:7px">5</div>
<div class="t" style="left:533.5px;top:121px;width:10px;text-align:center;font-size:6.5px;color:#5a5a5a;line-height:7px">6</div>
<div class="t" style="left:552.1px;top:121px;width:10px;text-align:center;font-size:6.5px;color:#5a5a5a;line-height:7px">7</div>
<div class="t" style="left:570.6px;top:121px;width:10px;text-align:center;font-size:6.5px;color:#5a5a5a;line-height:7px">8</div>
<div class="t" style="left:589.2px;top:121px;width:10px;text-align:center;font-size:6.5px;color:#5a5a5a;line-height:7px">9</div>
<div class="t" style="left:607.7px;top:121px;width:10px;text-align:center;font-size:6.5px;color:#5a5a5a;line-height:7px">10</div>
<div class="t" style="left:626.2px;top:121px;width:10px;text-align:center;font-size:6.5px;color:#5a5a5a;line-height:7px">11</div>
<div class="t" style="left:644.8px;top:121px;width:10px;text-align:center;font-size:6.5px;color:#5a5a5a;line-height:7px">12</div>
<div class="abs" style="left:195.2px;top:123.2px;width:.8px;height:2.6px;background:#555"></div>
<div class="abs" style="left:213.8px;top:123.2px;width:.8px;height:2.6px;background:#555"></div>
<div class="abs" style="left:232.3px;top:123.2px;width:.8px;height:2.6px;background:#555"></div>
<div class="abs" style="left:250.9px;top:123.2px;width:.8px;height:2.6px;background:#555"></div>
<div class="abs" style="left:269.4px;top:123.2px;width:.8px;height:2.6px;background:#555"></div>
<div class="abs" style="left:287.9px;top:123.2px;width:.8px;height:2.6px;background:#555"></div>
<div class="abs" style="left:306.5px;top:123.2px;width:.8px;height:2.6px;background:#555"></div>
<div class="abs" style="left:325.0px;top:123.2px;width:.8px;height:2.6px;background:#555"></div>
<div class="abs" style="left:343.6px;top:123.2px;width:.8px;height:2.6px;background:#555"></div>
<div class="abs" style="left:362.1px;top:123.2px;width:.8px;height:2.6px;background:#555"></div>
<div class="abs" style="left:380.7px;top:123.2px;width:.8px;height:2.6px;background:#555"></div>
<div class="abs" style="left:399.2px;top:123.2px;width:.8px;height:2.6px;background:#555"></div>
<div class="abs" style="left:417.7px;top:123.2px;width:.8px;height:2.6px;background:#555"></div>
<div class="abs" style="left:436.3px;top:123.2px;width:.8px;height:2.6px;background:#555"></div>
<div class="abs" style="left:454.8px;top:123.2px;width:.8px;height:2.6px;background:#555"></div>
<div class="abs" style="left:473.3px;top:123.2px;width:.8px;height:2.6px;background:#555"></div>
<div class="abs" style="left:491.9px;top:123.2px;width:.8px;height:2.6px;background:#555"></div>
<div class="abs" style="left:510.4px;top:123.2px;width:.8px;height:2.6px;background:#555"></div>
<div class="abs" style="left:529.0px;top:123.2px;width:.8px;height:2.6px;background:#555"></div>
<div class="abs" style="left:547.5px;top:123.2px;width:.8px;height:2.6px;background:#555"></div>
<div class="abs" style="left:566.1px;top:123.2px;width:.8px;height:2.6px;background:#555"></div>
<div class="abs" style="left:584.6px;top:123.2px;width:.8px;height:2.6px;background:#555"></div>
<div class="abs" style="left:603.1px;top:123.2px;width:.8px;height:2.6px;background:#555"></div>
<div class="abs" style="left:621.7px;top:123.2px;width:.8px;height:2.6px;background:#555"></div>
<div class="abs" style="left:640.2px;top:123.2px;width:.8px;height:2.6px;background:#555"></div>
<div class="abs" style="left:658.8px;top:123.2px;width:.8px;height:2.6px;background:#555"></div>
<div class="abs" style="left:191px;top:135.6px;width:471px;height:353.6px;background:#fefdfd;overflow:hidden">
<svg class="abs" style="left:0;top:0" width="471" height="354" viewBox="0 0 471 354"><path d="M13.8 0 V354" stroke="#d0d0d0" stroke-width=".8" stroke-dasharray=".8 2.3"/><path d="M50.9 0 V354" stroke="#d0d0d0" stroke-width=".8" stroke-dasharray=".8 2.3"/><path d="M88.0 0 V354" stroke="#757575" stroke-width=".8" stroke-dasharray=".9 2.2"/><path d="M125.1 0 V354" stroke="#d0d0d0" stroke-width=".8" stroke-dasharray=".8 2.3"/><path d="M162.1 0 V354" stroke="#d0d0d0" stroke-width=".8" stroke-dasharray=".8 2.3"/><path d="M199.2 0 V354" stroke="#d0d0d0" stroke-width=".8" stroke-dasharray=".8 2.3"/><path d="M236.3 0 V354" stroke="#d0d0d0" stroke-width=".8" stroke-dasharray=".8 2.3"/><path d="M273.4 0 V354" stroke="#d0d0d0" stroke-width=".8" stroke-dasharray=".8 2.3"/><path d="M310.5 0 V354" stroke="#d0d0d0" stroke-width=".8" stroke-dasharray=".8 2.3"/><path d="M347.5 0 V354" stroke="#d0d0d0" stroke-width=".8" stroke-dasharray=".8 2.3"/><path d="M384.6 0 V354" stroke="#757575" stroke-width=".8" stroke-dasharray=".9 2.2"/><path d="M421.7 0 V354" stroke="#d0d0d0" stroke-width=".8" stroke-dasharray=".8 2.3"/><path d="M458.8 0 V354" stroke="#d0d0d0" stroke-width=".8" stroke-dasharray=".8 2.3"/><path d="M0 -8.7 H471" stroke="#d2d2d2" stroke-width=".8" stroke-dasharray=".8 2.3"/><path d="M0 28.4 H471" stroke="#d2d2d2" stroke-width=".8" stroke-dasharray=".8 2.3"/><path d="M0 65.5 H471" stroke="#d2d2d2" stroke-width=".8" stroke-dasharray=".8 2.3"/><path d="M0 102.5 H471" stroke="#d2d2d2" stroke-width=".8" stroke-dasharray=".8 2.3"/><path d="M0 139.6 H471" stroke="#d2d2d2" stroke-width=".8" stroke-dasharray=".8 2.3"/><path d="M0 176.7 H471" stroke="#d2d2d2" stroke-width=".8" stroke-dasharray=".8 2.3"/><path d="M0 213.8 H471" stroke="#d2d2d2" stroke-width=".8" stroke-dasharray=".8 2.3"/><path d="M0 250.9 H471" stroke="#d2d2d2" stroke-width=".8" stroke-dasharray=".8 2.3"/><path d="M0 287.9 H471" stroke="#d2d2d2" stroke-width=".8" stroke-dasharray=".8 2.3"/><path d="M0 325.0 H471" stroke="#d2d2d2" stroke-width=".8" stroke-dasharray=".8 2.3"/><path d="M0 362.1 H471" stroke="#d2d2d2" stroke-width=".8" stroke-dasharray=".8 2.3"/></svg>
</div>
<div class="t" style="left:436.4px;top:222.7px;font-size:18.27px;font-family:'Liberation Serif',serif;color:#141414;transform:translate(-50%,-100%);line-height:1;">A Tale of Two Pandemics:</div>
<div class="t" style="left:438.3px;top:248.6px;font-size:18.27px;font-family:'Liberation Serif',serif;color:#141414;transform:translate(-50%,-100%);line-height:1;">Polarization in Elite Discourse of COVID-19 on</div>
<div class="t" style="left:436.9px;top:271.2px;font-size:18.27px;font-family:'Liberation Serif',serif;color:#141414;transform:translate(-50%,-100%);line-height:1;">Chinese Social Media</div>
<div class="t" style="left:436.85px;top:316.2px;font-size:13px;font-family:'Liberation Sans',sans-serif;color:#4a5268;transform:translate(-50%,-100%);line-height:1;letter-spacing:.04px;">Meng Tianguang, Zhang Kaiping, Zheng Siyao</div>
<div class="t" style="left:436.85px;top:356.2px;font-size:13px;font-family:'Liberation Sans',sans-serif;color:#4a5268;transform:translate(-50%,-100%);line-height:1;">Department of Political Science</div>
<div class="t" style="left:436.85px;top:375.4px;font-size:13px;font-family:'Liberation Sans',sans-serif;color:#4a5268;transform:translate(-50%,-100%);line-height:1;">Tsinghua University</div>
<div class="t" style="left:425.8px;top:441.3px;font-size:14.7px;font-family:'IPAGothic','Liberation Mono',monospace;color:#4f1672;-webkit-text-stroke:.25px #4f1672;transform-origin:50% 100%;transform:translate(-50%,-100%) scaleY(1.13);line-height:1">September 6th， 2021</div>
<div class="abs" style="left:771px;top:120px;width:8.6px;height:346px;background:#dbdbdb"></div>
<div class="abs" style="left:771px;top:128.6px;width:8.6px;height:15px;background:#fefefe;border:.5px solid #dcdcdc"></div>
<div class="abs" style="left:771px;top:120px;width:8.6px;height:8px;background:#fdfdfd"></div>
<div class="abs" style="left:771px;top:457.6px;width:8.6px;height:8px;background:#fdfdfd"></div>
<div class="abs" style="left:771px;top:466px;width:8.6px;height:30px;background:#e4e4e5"></div>
<svg class="abs" style="left:771px;top:120px" width="9" height="376" viewBox="0 0 9 376"><path d="M2 5.6 h4.6 l-2.3 -2.6 z M2 340.4 h4.6 l-2.3 2.6 z" fill="#4a4a4a"/><g fill="none" stroke="#666" stroke-width=".8"><path d="M2.6 350.6 l1.7 -1.6 l1.7 1.6 M2.6 353 l1.7 -1.6 l1.7 1.6 M2.6 358.6 l1.7 1.6 l1.7 -1.6 M2.6 361 l1.7 1.6 l1.7 -1.6"/></g></svg>
<div class="abs" style="left:0;top:495.6px;width:780px;height:12px;background:#f0f0f1"></div>
<div class="abs" style="left:0;top:507.4px;width:780px;height:1.6px;background:#151617"></div>
<div class="t" style="left:2px;top:498.4px;font-size:6.4px;color:#555;line-height:7px">幻灯片 第 1 张，共 22 张</div>
<div class="t" style="left:93px;top:498.4px;font-size:6.4px;color:#555;line-height:7px">英语(美国)</div>
<svg class="abs" style="left:0;top:495.6px" width="780" height="12" viewBox="0 495.6 780 12">
<rect x="82" y="498.6" width="4.6" height="5.6" fill="none" stroke="#999" stroke-width=".6"/><path d="M84.2 502.6 l1.2 1.4 l2.6 -4.6" fill="none" stroke="#555" stroke-width=".8"/>
<path d="M567.6 503.6 h4.6 M567.6 502 h4.6 M569.9 499 l1.4 1.6 h-2.8 z" stroke="#888" stroke-width=".6" fill="#888"/>
<path d="M595 499 h5 v3.4 h-2.4 l-1.2 1.4 v-1.4 h-1.4 z" fill="#555"/>
<rect x="623" y="496.6" width="12.4" height="10.4" fill="#c9c9c9"/>
<g fill="none" stroke="#777" stroke-width=".7">
<rect x="626" y="498.6" width="6.6" height="6.2"/><path d="M628 498.6 v6.2 M628 500.4 h4.6"/>
<rect x="640.6" y="498.6" width="6.8" height="6.2"/><path d="M644 498.6 v6.2 M640.6 501.7 h6.8"/>
<rect x="654" y="498.6" width="7" height="6.2"/><path d="M656 498.6 v6.2 M659 498.6 v6.2"/>
<path d="M668 499 h7 M669 499 v3.6 h5 v-3.6 M671.5 502.6 v1.6 M670 504.6 h3"/>
<path d="M681 501.8 h3.2"/><path d="M687 501.8 h54" stroke="#b5b5b5" stroke-width=".6"/><path d="M743.6 501.8 h3.6 M745.4 500 v3.6"/>
<rect x="771" y="498.6" width="6.6" height="6.2"/><path d="M772.4 500 l1.4 1.4 M776.2 500 l-1.4 1.4 M772.4 503.4 l1.4 -1.4 M776.2 503.4 l-1.4 -1.4"/>
</g>
<rect x="710.4" y="498.8" width="2" height="6" fill="#555"/>
</svg>
<div class="t" style="left:574.4px;top:498.4px;font-size:6.4px;color:#555;line-height:7px">备注</div>
<div class="t" style="left:601.6px;top:498.4px;font-size:6.4px;color:#555;line-height:7px">批注</div>
<div class="t" style="left:752px;top:498.4px;font-size:6.6px;color:#555;line-height:7px">91%</div>
<svg class="abs" style="left:684px;top:288px" width="10" height="13" viewBox="0 0 10 13"><path d="M1.3 1 V10.2 L3.5 8.2 L4.9 11.2 L6 10.7 L4.7 7.8 L7.8 7.5 Z" fill="#fbfbfb" stroke="#3a3a3a" stroke-width=".8" stroke-linejoin="round"/></svg>
</div>
</div></div>
<div id="rp" class="abs">
<div class="abs" style="left:-780px;top:-2px;width:953px;height:579px">
<!-- tile 1 : conference room -->
<div class="abs" style="left:789px;top:-14px;width:158px;height:88px;border:1px solid #38393c;border-radius:4px;background:#121212;overflow:hidden">
<svg class="abs" style="left:2px;top:15px" width="153" height="72" viewBox="792 2 153 72" preserveAspectRatio="none">
<defs><filter id="b1" x="-5%" y="-5%" width="110%" height="110%"><feGaussianBlur stdDeviation="0.55"/></filter>
<linearGradient id="wl" x1="0" y1="0" x2="1" y2="0"><stop offset="0" stop-color="#dfe2da"/><stop offset=".5" stop-color="#e9eae4"/><stop offset="1" stop-color="#e6e3d6"/></linearGradient></defs>
<g filter="url(#b1)">
<rect x="789" y="0" width="160" height="76" fill="url(#wl)"/>
<!-- cabinet -->
<rect x="789" y="0" width="28.2" height="42" fill="#852a2e"/>
<rect x="795.4" y="3" width="6.2" height="33" fill="#57504a"/><rect x="804.2" y="3" width="6" height="33" fill="#5a524b"/><rect x="812" y="3" width="3.4" height="33" fill="#56504a"/>
<path d="M795 12 h7 M804 13 h6.4 M795 25 h7 M804 26 h6.4" stroke="#7a4a44" stroke-width=".8"/>
<rect x="789" y="36" width="28" height="8" fill="#6e2226"/>
<circle cx="821.6" cy="6.6" r="3" fill="none" stroke="#c4cad0" stroke-width=".7"/>
<!-- door -->
<rect x="870" y="0" width="40" height="47.4" fill="#7c2629"/>
<rect x="870" y="0" width="40" height="11.4" fill="#8a2c2c"/>
<rect x="872" y="4.8" width="17" height="4.2" fill="#f2efe6"/><rect x="891" y="4.8" width="15.6" height="4.2" fill="#f2efe6"/>
<rect x="873.6" y="12.8" width="16.6" height="6.6" rx="1" fill="#ad8c90"/><rect x="895" y="19" width="9.4" height="7" rx=".8" fill="#a98a8e"/><rect x="880.6" y="21" width="4.6" height="6.4" fill="#9a9494"/>
<rect x="891.6" y="32" width="1" height="4.6" fill="#c4a070"/>
<!-- thermostat -->
<rect x="933" y="16" width="9" height="7" fill="#f4f4f2"/><rect x="934" y="18.2" width="7" height="3.4" fill="#3a4a55"/>
<!-- table -->
<rect x="789" y="46.6" width="160" height="30" fill="#3a1a18"/>
<rect x="828" y="45.6" width="98" height="5.4" fill="#6a2a22"/>
<rect x="836" y="46.8" width="8" height="2.6" fill="#e6e6e2"/><rect x="846" y="47.6" width="10" height="2.4" fill="#ddd"/><rect x="874" y="47.2" width="9" height="2.8" fill="#d8ecea"/><rect x="888" y="48" width="9" height="2.2" fill="#e9e6e0"/>
<!-- chairs -->
<rect x="792" y="41.6" width="9" height="12" rx="1.6" fill="#1a2024"/>
<rect x="819" y="34.8" width="10.8" height="17" rx="1.8" fill="#14161a"/>
<rect x="831" y="34.4" width="12" height="14.6" rx="1.8" fill="#181a20"/>
<rect x="873.8" y="34.8" width="13.6" height="10.6" rx="1.8" fill="#191b20"/>
<rect x="931" y="32.8" width="12.6" height="8" rx="1.4" fill="#15171a"/>
<rect x="924" y="35.6" width="20" height="22" rx="2.6" fill="#111316"/>
<!-- person 1 -->
<path d="M797.6 54 C797.6 43 802 39.4 808 38.6 L816 38.6 C820.6 40 822 45 822 54 Z" fill="#d6ddec"/>
<ellipse cx="813.2" cy="33" rx="4.3" ry="5.6" fill="#b8d0e0"/>
<path d="M809 31 C809 26.6 817.4 26.6 817.4 31 L817.2 29.6 C815 28.6 811.6 28.6 809.2 30 Z" fill="#262222"/><rect x="809.2" y="27" width="8" height="3.4" rx="1.6" fill="#2b2626"/>
<rect x="809.6" y="30.2" width="7.4" height="1.6" fill="#b99a88"/>
<!-- person 2 -->
<path d="M847.6 50 C847.6 39.4 851.6 35.6 856 34.8 L860 34.8 C865.6 36 868.2 40 868.2 50 Z" fill="#c9e6f2"/>
<ellipse cx="857.6" cy="30.4" rx="3.5" ry="4.5" fill="#b48a74"/><rect x="854" y="25.8" width="7.2" height="3.2" rx="1.6" fill="#1f1b1b"/>
<rect x="853" y="44" width="10" height="3" fill="#d9c9b6"/>
<!-- person 3 -->
<path d="M896 52 C897 41 902 36.6 909 35.4 L916 35.4 C921.6 37 924.4 42 924.4 52 Z" fill="#e9ebf2"/>
<ellipse cx="913.2" cy="30.6" rx="4.5" ry="5.4" fill="#c19680"/><path d="M908.6 29 C908.6 23.4 918 23.4 918 29 C916 26.8 911 26.8 908.6 29 Z" fill="#1f1b1b"/>
<rect x="901.6" y="45.6" width="4" height="4.4" fill="#5a2a3a"/>
</g>
</svg>
<!-- up overlay -->
<div class="abs" style="left:46px;top:25px;width:71.6px;height:19.6px;border-radius:3px;background:rgba(118,114,114,.66)"></div>
<svg class="abs" style="left:46px;top:25px" width="71" height="20" viewBox="0 0 71 20"><path d="M30.6 12.6 L35.8 7.2 L41 12.6" fill="none" stroke="#fff" stroke-width="1.3"/></svg>
<!-- name bar -->
<div class="abs" style="left:2px;top:64.6px;width:153px;height:21.4px;background:rgba(22,14,14,.62)"></div>
<div class="abs" style="left:1.6px;top:65px;width:20.4px;height:20.4px;background:#ff7d14"></div>
<svg class="abs" style="left:1.6px;top:65px" width="20.4" height="20.4" viewBox="0 0 21 21"><circle cx="10.3" cy="7.2" r="3.5" fill="#fff"/><path d="M3.4 17.6 C3.4 13.2 6.5 11.8 8.6 11.4 L10.3 12.8 L12 11.4 C14.2 11.8 17.2 13.2 17.2 17.6 Z" fill="#fff"/></svg>
<svg class="abs" style="left:28px;top:68.5px" width="16" height="15" viewBox="0 0 16 15"><rect x="4.7" y="1" width="5.8" height="8.6" rx="2.9" fill="#fff"/><path d="M2.5 6.8 a5.1 5.1 0 0 0 10.2 0" fill="none" stroke="#fff" stroke-width="1.3"/><path d="M7.6 11.8 V13.6" stroke="#fff" stroke-width="1.5"/><path d="M2.2 12.4 L13 1.4" stroke="#ff4040" stroke-width="1.5"/></svg>
<div class="t" style="left:46px;top:70.2px;font-size:11.05px;color:#fff">会务组技术员-郭晓慧</div>
</div>

<!-- tile 2 : MaxMeng -->
<div class="abs" style="left:788px;top:82.6px;width:160px;height:90px;border:2px solid #07c160;border-radius:5px;background:#141414;overflow:hidden">
<svg class="abs" style="left:2px;top:0.4px" width="152" height="86" viewBox="792 85 152 86" preserveAspectRatio="none">
<defs>
<linearGradient id="sky" x1="0" y1="0" x2="0" y2="1"><stop offset="0" stop-color="#a9c5d5"/><stop offset=".32" stop-color="#c6d8e0"/><stop offset=".5" stop-color="#d3dfe2"/><stop offset="1" stop-color="#9fb3ba"/></linearGradient>
<linearGradient id="trl" x1="0" y1="0" x2="0" y2="1"><stop offset="0" stop-color="#4c7159"/><stop offset=".6" stop-color="#4d6f63"/><stop offset="1" stop-color="#5d7f86"/></linearGradient>
<linearGradient id="trr" x1="0" y1="0" x2="0" y2="1"><stop offset="0" stop-color="#3c5a5a"/><stop offset=".55" stop-color="#4a6a70"/><stop offset=".85" stop-color="#86a0ac"/><stop offset="1" stop-color="#7f9aa4"/></linearGradient>
<linearGradient id="fc" x1="0" y1="0" x2="1" y2="0"><stop offset="0" stop-color="#a88470"/><stop offset=".4" stop-color="#b48e7b"/><stop offset=".72" stop-color="#9a7563"/><stop offset="1" stop-color="#7c5a4b"/></linearGradient>
<filter id="b2" x="-5%" y="-5%" width="110%" height="110%"><feGaussianBlur stdDeviation="0.8"/></filter>
<filter id="b3" x="-10%" y="-10%" width="120%" height="120%"><feGaussianBlur stdDeviation="1.3"/></filter>
</defs>
<rect x="790" y="84" width="157" height="90" fill="url(#sky)"/>
<g filter="url(#b3)">
<path d="M790 112 C794 110 798 112 802 111 C806 110 810 113 812.6 116 C815 112 820 109.6 826 110 C832 110 838 113 842 118 C846 122 850 126 852 128 L852 175 L790 175 Z" fill="url(#trl)"/>
<path d="M812 118 C820 110 836 110 846 124 L850 175 L812 175 Z" fill="#5b7c80" opacity=".8"/>
<path d="M895 120 C900 117 906 119 912 122 C918 124 922 118 926 112 C930 108 934 106 937 104 L939.6 99 L942 104 C944 106 947 108 948 110 L948 175 L890 175 Z" fill="url(#trr)"/>
<rect x="898" y="106" width="5.8" height="12" fill="#b37840"/><rect x="902" y="113" width="10" height="8" fill="#8e6a50"/>
<path d="M790 140 L852 140 L852 175 L790 175 Z" fill="#4f6e72" opacity=".8"/>
</g>
<g filter="url(#b2)">
<path d="M908 154.4 L948 153 L948 175 L900 175 Z" fill="#2a7436"/>
<path d="M925 162 L948 160 L948 175 L930 175 Z" fill="#1f5c2a"/>
<!-- statue -->
<path d="M811.6 152 C812.6 140 815 131 819 128 L825 128 C829 131 831 140 833 152 Z" fill="#7f9dba"/>
<path d="M817 152 C817.6 140 819 134 821.6 132 C824 134 825.6 140 826.6 152 Z" fill="#9ab4cc"/>
<ellipse cx="821.4" cy="123.2" rx="4.8" ry="4.4" fill="#303c38"/>
<!-- jacket / shirt -->
<path d="M820 175 C830 160 846 152 858 150 L874 152 L876 175 Z" fill="#3c3f46"/>
<path d="M872 175 C876 164 882 154 892 148.4 L900 148.6 C914 152 930 160 938.6 175 Z" fill="#c9d4e9"/>
<path d="M884 175 C886 166 890 158 896 152 L900 156 C894 162 890 168 889 175 Z" fill="#aebbd6"/>
<!-- neck -->
<path d="M858 146 L894 142 L893 152 C888 160 882 166 878 170 C870 166 862 158 858 146 Z" fill="#85634f"/>
<!-- face -->
<path d="M849 114 C848 96 858 86.4 873 86.4 C889 86.4 898.6 96 898 114 C898 122 896.6 128 894 134 C892 146 888 154 882 158.6 C876 162 868 161.6 863 157 C856 150 850.6 134 849 114 Z" fill="url(#fc)"/>
<ellipse cx="868" cy="104" rx="12" ry="6" fill="#c9a590" opacity=".7"/>
<path d="M862 134 C866 131 878 131 882 134 C880 139 864 139 862 134 Z" fill="#c49c88" opacity=".6"/>
<!-- ear -->
<path d="M895.4 116 C898.6 114 899.6 120 898 125 C897 128 895 129 894 128 Z" fill="#a07866"/>
<!-- hair -->
<path d="M848.4 112 C846.4 94 857 84.6 873 84.6 C890 84.6 900 94 898.4 116 C897.4 114 896.6 112 895.6 109 C894 100 888 95.4 874 95 C860 95 853 99 851 104 C850 107 849.4 110 848.4 112 Z" fill="#2b2625"/>
<!-- brows -->
<path d="M853.4 113.4 C857 111.4 862 111.6 866.4 113.4 M876.6 112 C881 109.8 886 109.6 890.6 111" stroke="#4a3a34" stroke-width="1.5" fill="none" opacity=".85"/>
<!-- glasses -->
<path d="M848.6 118.4 L872 117.4 L897.6 114.8" stroke="#1d1c22" stroke-width="1.1" fill="none"/>
<ellipse cx="861.8" cy="120.4" rx="6" ry="2.3" fill="#2b36c8" opacity=".85"/>
<ellipse cx="882.8" cy="119.4" rx="5.9" ry="2.2" fill="#2b36c8" opacity=".85"/>
<path d="M855.6 123.4 C859 124.6 864 124.6 868 123.2 M877 122.6 C881 123.8 886 123.6 889.4 122.2" stroke="#6a6680" stroke-width=".6" fill="none"/>
<!-- nose -->
<path d="M870 123 C868.6 129 866.6 133 868 135.4 C870 137 875 137 877.6 135.4" stroke="#8e6857" stroke-width="1.3" fill="none"/>
<ellipse cx="871" cy="130" rx="2.4" ry="4" fill="#cfa893" opacity=".8"/>
<!-- mouth -->
<path d="M863.6 146.4 C869 144.4 878 144.2 883.4 146 C880 150.6 868 151 863.6 146.4 Z" fill="#774844"/>
<path d="M866 146.6 C870 145.8 878 145.8 881.4 146.4 L880 148 C876 148.4 870 148.4 867 148 Z" fill="#eadfd8"/>
<path d="M860 141 C866 139 880 139 886 141" stroke="#96705f" stroke-width="1" fill="none" opacity=".7"/>
</g>
</svg>
<div class="abs" style="left:2px;top:65px;width:80px;height:21px;background:rgba(16,18,18,.76)"></div>
<svg class="abs" style="left:6.4px;top:67.6px" width="14" height="16" viewBox="0 0 14 16"><rect x="4.2" y="1.2" width="5.6" height="9" rx="2.8" fill="#fff"/><path d="M1.6 7.4 a5.4 5.4 0 0 0 10.8 0" fill="none" stroke="#fff" stroke-width="1.3"/><path d="M7 12.8 V14.6" stroke="#fff" stroke-width="1.4"/></svg>
<div class="t" style="left:24.4px;top:70px;font-size:11.9px;color:#fff">MaxMeng</div>
</div>

<!-- tile 3 : Shandong -->
<div class="tile" style="left:789px;top:182px;height:88px">
<svg class="abs" style="left:53px;top:10.5px" width="51" height="51" viewBox="-25.5 -25.5 51 51">
<defs><clipPath id="c3"><circle r="16.6"/></clipPath>
<path id="arcb" d="M-22.2 3.6 A22.5 22.5 0 0 0 22.2 3.6"/>
<path id="arct" d="M-19.4 -1 A19.6 19.6 0 0 1 19.4 -1"/></defs>
<circle r="24.2" fill="#fdfbfb" stroke="#9b2232" stroke-width="1.1"/>
<g clip-path="url(#c3)">
<rect x="-18" y="-18" width="36" height="36" fill="#a9c0ab"/>
<rect x="4" y="-8" width="14" height="26" fill="#d8d9a0"/>
<circle cx="9" cy="2" r="3" fill="#e4cf4a"/><circle cx="11" cy="8" r="2.6" fill="#e0c63c"/><circle cx="6.5" cy="6" r="2" fill="#e8d65a"/>
<path d="M-9 -3 C-12 6 -12 14 -9 19 L4 19 C6 10 5 2 3 -3 Z" fill="#5e4d56"/>
<path d="M-2 8 C2 6 6 8 7 12 L7 19 L-3 19 Z" fill="#ead9d2"/>
<path d="M-12 -4 C-10 -8 -8 -10 -7 -14 C-4 -17 1 -17 4 -14 C5 -10 7 -7 9 -4 C5 -1 -8 -1 -12 -4 Z" fill="#f3dab0"/>
</g>
<circle r="16.8" fill="none" stroke="#9b2232" stroke-width=".9"/>
<text font-family="'Liberation Sans',sans-serif" font-weight="bold" font-size="5.3" fill="#8e1f2e"><textPath href="#arcb" startOffset="1.5" textLength="60" lengthAdjust="spacingAndGlyphs">SHANDONG UNIVERSITY</textPath></text>
<text font-family="'Noto Serif CJK SC',serif" font-size="6" fill="#a32a3a" letter-spacing="6.5"><textPath href="#arct" startOffset="50%" text-anchor="middle">山东大学</textPath></text>
<path d="M12.5 -20 l3.5 -3 l1.5 3.5 z" fill="#e7c417"/>
</svg>
<div class="nm" style="width:153.4px;height:21.4px;background:rgba(10,10,11,.86)"></div>
<div class="abs" style="left:.7px;top:64.7px;width:20.5px;height:20.4px;background:#0a6cff"></div>
<svg class="abs" style="left:.7px;top:64.7px" width="20.5" height="20.4" viewBox="0 0 21 21"><circle cx="10.4" cy="7" r="3.6" fill="#fff"/><path d="M3.4 17.8 C3.4 13.2 6.5 11.6 10.4 11.6 C14.3 11.6 17.4 13.2 17.4 17.8 Z" fill="#fff"/></svg>
<svg class="abs" style="left:27px;top:68.4px" width="16" height="15" viewBox="0 0 16 15"><rect x="4.7" y="1" width="5.8" height="8.6" rx="2.9" fill="#fff"/><path d="M2.5 6.8 a5.1 5.1 0 0 0 10.2 0" fill="none" stroke="#fff" stroke-width="1.3"/><path d="M7.6 11.8 V13.6" stroke="#fff" stroke-width="1.5"/><path d="M2.2 12.4 L13 1.4" stroke="#ff4040" stroke-width="1.5"/></svg>
<div class="t" style="left:46px;top:70px;font-size:11.05px;color:#fff">会务组记录员-苗英荟</div>
</div>

<!-- tile 4 : 师大 -->
<div class="tile" style="left:789px;top:280px;height:88px">
<div class="abs" style="left:53px;top:11px;width:50px;height:50px;border-radius:50%;background:#0a72ff;color:#fff;font-size:18px;line-height:51px;text-align:center">师大</div>
<div class="nm" style="width:105px;height:21.5px"></div>
<svg class="abs" style="left:4px;top:68.4px" width="16" height="15" viewBox="0 0 16 15"><rect x="4.7" y="1" width="5.8" height="8.6" rx="2.9" fill="#fff"/><path d="M2.5 6.8 a5.1 5.1 0 0 0 10.2 0" fill="none" stroke="#fff" stroke-width="1.3"/><path d="M7.6 11.8 V13.6" stroke="#fff" stroke-width="1.5"/><path d="M2.2 12.4 L13 1.4" stroke="#ff4040" stroke-width="1.5"/></svg>
<div class="t" style="left:24px;top:70px;font-size:11.05px;color:#fff">吴龙军东北师大</div>
</div>

<!-- tile 5 : seal -->
<div class="tile" style="left:789px;top:378px;height:88px">
<svg class="abs" style="left:53px;top:10.4px" width="51" height="51" viewBox="-25.5 -25.5 51 51">
<defs><clipPath id="c5"><circle r="24.6"/></clipPath><filter id="b5"><feGaussianBlur stdDeviation="0.35"/></filter></defs>
<circle r="24.6" fill="#ded4c9"/>
<circle r="23.6" fill="none" stroke="#e2281b" stroke-width="2.2"/>
<g clip-path="url(#c5)" filter="url(#b5)" fill="#e0301f" font-family="'Noto Sans CJK SC','Noto Serif CJK SC',sans-serif" font-weight="400">
<text x="-21" y="-1" font-size="20">東</text>
<text x="0" y="-2" font-size="19">之</text>
<text x="-21" y="19" font-size="19">里</text>
<text x="0" y="20" font-size="20">文</text>
</g>
</svg>
<div class="nm" style="width:50px;height:21px"></div>
<svg class="abs" style="left:4px;top:68.4px" width="16" height="15" viewBox="0 0 16 15"><rect x="4.7" y="1" width="5.8" height="8.6" rx="2.9" fill="#fff"/><path d="M2.5 6.8 a5.1 5.1 0 0 0 10.2 0" fill="none" stroke="#fff" stroke-width="1.3"/><path d="M7.6 11.8 V13.6" stroke="#fff" stroke-width="1.5"/><path d="M2.2 12.4 L13 1.4" stroke="#ff4040" stroke-width="1.5"/></svg>
<div class="t" style="left:24px;top:70px;font-size:11.05px;color:#fff">文东</div>
</div>

<!-- tile 6 : 俊生 -->
<div class="tile" style="left:789px;top:476px;height:88px">
<div class="abs" style="left:53px;top:10.6px;width:50px;height:50px;border-radius:50%;background:#0a72ff;color:#fff;font-size:17.8px;line-height:53.4px;text-align:center">俊生</div>
<div class="abs" style="left:46.4px;top:19.8px;width:71px;height:19.8px;border-radius:3px;background:rgba(24,24,25,.78)"></div>
<svg class="abs" style="left:46px;top:20px" width="71" height="20" viewBox="0 0 71 20"><path d="M30.6 7.8 L35.6 13.4 L40.6 7.8" fill="none" stroke="#fff" stroke-width="1.3"/></svg>
</div>
</div>

</div>
<div class="abs" style="left:764px;top:255px;width:16px;height:40px;background:rgba(78,78,80,.92);border-radius:4px 0 0 4px"></div>
<svg class="abs" style="left:764px;top:255px" width="16" height="40" viewBox="0 0 16 40"><path d="M5.8 14.8 L11.2 20 L5.8 25.2" fill="none" stroke="#b4b4b4" stroke-width="1.1"/></svg>
<div class="abs" style="left:782px;top:264px;width:1px;height:24px;background:#bdbdbd"></div>
<div class="abs" style="left:785.5px;top:264px;width:1px;height:24px;background:#bdbdbd"></div>
<div id="tb" class="abs">
<svg class="abs" style="left:0;top:0" width="953" height="52" viewBox="0 0 953 52">
<g fill="#3f4045" stroke="none">
<!-- mic -->
<rect x="28.5" y="6" width="7.6" height="15.5" rx="3.8"/>
<path d="M25 15.5 v1.5 a7.3 7.3 0 0 0 14.6 0 v-1.5" fill="none" stroke="#3f4045" stroke-width="1.5"/>
<rect x="31.6" y="24" width="1.5" height="5"/>
<rect x="26.5" y="28.3" width="11.6" height="1.5"/>
<!-- video -->
<rect x="86" y="10" width="16.8" height="15.8" rx="1.6"/>
<path d="M104 15.3 L110 11.5 V24.5 L104 20.7 Z"/>
<!-- share screen -->
<rect x="254" y="10" width="24" height="15.3" rx="1.8"/>
<rect x="259.5" y="27.6" width="13" height="1.6"/>
<!-- shield -->
<path d="M331.2 6.3 L340.4 10 V20.5 C340.4 24.5 336.5 27.5 331.2 29 C326 27.5 322 24.5 322 20.5 V10 Z"/>
<!-- invite -->
<circle cx="383.6" cy="13.2" r="4.4"/>
<path d="M374 29 C374 22.5 378 19 383.6 19 C387 19 389.5 20 391 22 A6.4 6.4 0 0 0 386.2 29 Z"/>
<circle cx="392.2" cy="25.2" r="5.3"/>
<!-- members -->
<circle cx="452.6" cy="13" r="4.7"/>
<path d="M442 29 C442 22.5 446.5 19 452.6 19 C458.7 19 463 22.5 463 29 Z"/>
<path d="M455.5 8.6 A4.9 4.9 0 0 1 458.7 16" fill="none" stroke="#3f4045" stroke-width="1"/>
<path d="M459.5 19.3 C463 21 465 24.5 465 29" fill="none" stroke="#3f4045" stroke-width="1"/>
<!-- chat -->
<path d="M513.2 10.7 H528.8 A2 2 0 0 1 530.8 12.7 V24 A2 2 0 0 1 528.8 26 H526.5 L523 29.6 V26 H513.2 A2 2 0 0 1 511.2 24 V12.7 A2 2 0 0 1 513.2 10.7 Z"/>
<!-- record -->
<circle cx="575" cy="17.8" r="10" fill="none" stroke="#3f4045" stroke-width="1.4"/>
<circle cx="575" cy="17.8" r="7.3"/>
<!-- apps -->
<rect x="631" y="9" width="8.6" height="8.6" rx="1.4"/>
<rect x="631" y="19.6" width="8.6" height="8.6" rx="1.4"/>
<rect x="641.7" y="19.6" width="8.6" height="8.6" rx="1.4"/>
<rect x="642.4" y="9" width="7.2" height="7.2" rx="1" fill="none" stroke="#3f4045" stroke-width="1.2" transform="rotate(45 646 12.6)"/>
<!-- gear -->
<g transform="translate(693.6 17.8)">
<circle r="6.5" fill="none" stroke="#3f4045" stroke-width="4.6"/>
<rect x="-2.3" y="-10.9" width="4.6" height="3.6" rx=".7" transform="rotate(0)"/><rect x="-2.3" y="-10.9" width="4.6" height="3.6" rx=".7" transform="rotate(45)"/><rect x="-2.3" y="-10.9" width="4.6" height="3.6" rx=".7" transform="rotate(90)"/><rect x="-2.3" y="-10.9" width="4.6" height="3.6" rx=".7" transform="rotate(135)"/><rect x="-2.3" y="-10.9" width="4.6" height="3.6" rx=".7" transform="rotate(180)"/><rect x="-2.3" y="-10.9" width="4.6" height="3.6" rx=".7" transform="rotate(225)"/><rect x="-2.3" y="-10.9" width="4.6" height="3.6" rx=".7" transform="rotate(270)"/><rect x="-2.3" y="-10.9" width="4.6" height="3.6" rx=".7" transform="rotate(315)"/>
</g>
</g>
<!-- white details -->
<g fill="none" stroke="#fff" stroke-width="1.5">
<path d="M262.6 20.6 C262.8 17.2 265 15.6 268 15.6 M267.2 12.8 L270.4 15.7 L267.2 18.6" />
<path d="M327.6 17 L331.2 13.6 L334.8 17 M327.6 21.4 L331.2 18 L334.8 21.4" stroke-width="1.4"/>
<path d="M392.2 22.2 V28.2 M389.2 25.2 H395.2" stroke-width="1.3"/>
</g>
<circle cx="392.2" cy="25.2" r="5.3" fill="none" stroke="#f8f8f9" stroke-width="1.2"/>
<g fill="#fff"><circle cx="516.6" cy="18.4" r="1.3"/><circle cx="521" cy="18.4" r="1.3"/><circle cx="525.4" cy="18.4" r="1.3"/></g>
<!-- red slashes -->
<g stroke="#f8f8f9" stroke-width="3.4" fill="none"><path d="M23.5 25.9 L40.6 9.2"/><path d="M87.3 26.2 L104.2 9.3"/></g>
<g stroke="#ff3b3b" stroke-width="1.8" fill="none"><path d="M23.5 25.9 L40.6 9.2"/><path d="M87.3 26.2 L104.2 9.3"/></g>
<!-- chevrons -->
<g fill="none" stroke="#3f4045" stroke-width="1.3">
<path d="M61 28.6 L65 24.4 L69 28.6"/>
<path d="M127 28.6 L131 24.4 L135 28.6"/>
<path d="M295 28.6 L299 24.4 L303 28.6"/>
<path d="M604 28.6 L608 24.4 L612 28.6"/>
</g>
</svg>
<div class="lb" style="left:32px">解除静音</div>
<div class="lb" style="left:98px">开启视频</div>
<div class="lb" style="left:266px">共享屏幕</div>
<div class="lb" style="left:331px">安全</div>
<div class="lb" style="left:383.5px">邀请</div>
<div class="lb" style="left:452px">管理成员(99+)</div>
<div class="lb" style="left:521px">聊天</div>
<div class="lb" style="left:575px">录制</div>
<div class="lb" style="left:641px">应用</div>
<div class="lb" style="left:694px">设置</div>
<div class="abs" style="left:848px;top:8px;width:76px;height:35.5px;border:1px solid #f5635b;border-radius:4px;color:#ee443f;font-size:13px;line-height:33px;text-align:center;background:#fbfbfb">离开会议</div>

</div>
</div></body></html>
